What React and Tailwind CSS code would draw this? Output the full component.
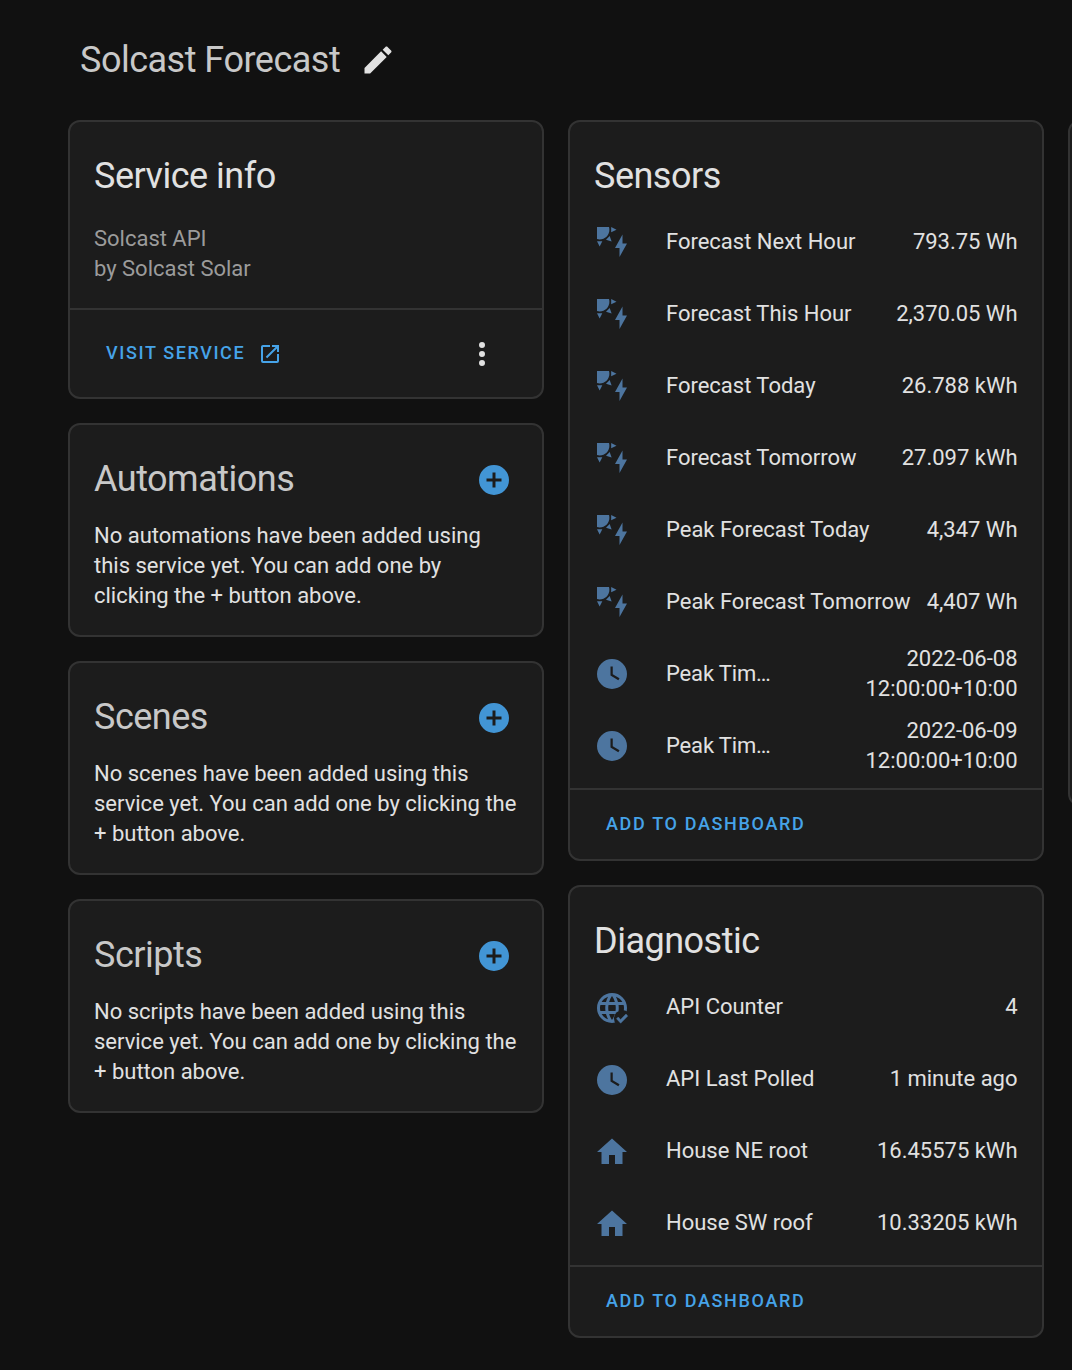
const SOLAR =
  "M11.45,2V5.55L15,3.77L11.45,2M10.45,8L8,10.46L11.75,11.71L10.45,8M2,11.45L3.77,15L5.55,11.45H2M10,2H2V10C2.57,10.17 3.17,10.25 3.77,10.25C7.35,10.26 10.26,7.35 10.27,3.75C10.26,3.16 10.17,2.57 10,2M17,22V16H14L19,7V13H22L17,22Z";
const CLOCK =
  "M12,2A10,10 0 0,0 2,12A10,10 0 0,0 12,22A10,10 0 0,0 22,12A10,10 0 0,0 12,2M16.2,16.2L11,13V7H12.5V12.2L17,14.9L16.2,16.2Z";
const HOME = "M10,20V14H14V20H19V12H22L12,3L2,12H5V20H10Z";
const PENCIL =
  "M20.71,7.04C21.1,6.65 21.1,6 20.71,5.63L18.37,3.29C18,2.9 17.35,2.9 16.96,3.29L15.12,5.12L18.87,8.87M3,17.25V21H6.75L17.81,9.93L14.06,6.18L3,17.25Z";
const OPEN =
  "M14,3V5H17.59L7.76,14.83L9.17,16.24L19,6.41V10H21V3M19,19H5V5H12V3H5C3.89,3 3,3.9 3,5V19A2,2 0 0,0 5,21H19A2,2 0 0,0 21,19V12H19V19Z";
const DOTS =
  "M12,16A2,2 0 0,1 14,18A2,2 0 0,1 12,20A2,2 0 0,1 10,18A2,2 0 0,1 12,16M12,10A2,2 0 0,1 14,12A2,2 0 0,1 12,14A2,2 0 0,1 10,12A2,2 0 0,1 12,10M12,4A2,2 0 0,1 14,6A2,2 0 0,1 12,8A2,2 0 0,1 10,6A2,2 0 0,1 12,4Z";
const PLUS =
  "M17,13H13V17H11V13H7V11H11V7H13V11H17M12,2A10,10 0 0,0 2,12A10,10 0 0,0 12,22A10,10 0 0,0 22,12A10,10 0 0,0 12,2Z";
const WEB =
  "M16.36,14C16.44,13.34 16.5,12.68 16.5,12C16.5,11.32 16.44,10.66 16.36,10H19.74C19.9,10.64 20,11.31 20,12C20,12.69 19.9,13.36 19.74,14M14.59,19.56C15.19,18.45 15.65,17.25 15.97,16H18.92C17.96,17.65 16.43,18.93 14.59,19.56M14.34,14H9.66C9.56,13.34 9.5,12.68 9.5,12C9.5,11.32 9.56,10.65 9.66,10H14.34C14.43,10.65 14.5,11.32 14.5,12C14.5,12.68 14.43,13.34 14.34,14M12,19.96C11.17,18.76 10.5,17.43 10.09,16H13.91C13.5,17.43 12.83,18.76 12,19.96M8,8H5.08C6.03,6.34 7.57,5.06 9.4,4.44C8.8,5.55 8.35,6.75 8,8M5.08,16H8C8.35,17.25 8.8,18.45 9.4,19.56C7.57,18.93 6.03,17.65 5.08,16M4.26,14C4.1,13.36 4,12.69 4,12C4,11.31 4.1,10.64 4.26,10H7.64C7.56,10.66 7.5,11.32 7.5,12C7.5,12.68 7.56,13.34 7.64,14M12,4.03C12.83,5.23 13.5,6.57 13.91,8H10.09C10.5,6.57 11.17,5.23 12,4.03M18.92,8H15.97C15.65,6.75 15.19,5.55 14.59,4.44C16.43,5.07 17.96,6.34 18.92,8M12,2C6.47,2 2,6.5 2,12A10,10 0 0,0 12,22A10,10 0 0,0 22,12A10,10 0 0,0 12,2Z";
const CHECK = "M17.75,22.16L15,19.16L16.16,18L17.75,19.59L21.34,16L22.5,17.41L17.75,22.16";

function Icon({ d, className }) {
  return (
    <svg viewBox="0 0 24 24" fill="currentColor" className={className}>
      <path d={d} />
    </svg>
  );
}

/* Globe with its lower right corner cleared for a check mark. */
function WebCheck({ className }) {
  return (
    <svg viewBox="0 0 24 24" fill="currentColor" className={className}>
      <path d={WEB} />
      <circle cx="19" cy="19" r="5.7" className="fill-[#1c1c1c]" />
      <path d={CHECK} stroke="currentColor" strokeWidth="0.3" />
    </svg>
  );
}

function Card({ className = "", children }) {
  return (
    <section
      className={`flex flex-col rounded-xl border-2 border-[#333333] bg-[#1c1c1c] ${className}`}
    >
      {children}
    </section>
  );
}

function Title({ children, className = "" }) {
  return (
    <h2 className={`text-[36px] leading-[48px] font-normal tracking-[-0.5px] ${className}`}>
      {children}
    </h2>
  );
}

const sensors = [
  [SOLAR, "Forecast Next Hour", "793.75 Wh"],
  [SOLAR, "Forecast This Hour", "2,370.05 Wh"],
  [SOLAR, "Forecast Today", "26.788 kWh"],
  [SOLAR, "Forecast Tomorrow", "27.097 kWh"],
  [SOLAR, "Peak Forecast Today", "4,347 Wh"],
  [SOLAR, "Peak Forecast Tomorrow", "4,407 Wh"],
  [CLOCK, "Peak Tim…", "2022-06-08 12:00:00+10:00"],
  [CLOCK, "Peak Tim…", "2022-06-09 12:00:00+10:00"],
];

const diagnostics = [
  [null, "API Counter", "4"],
  [CLOCK, "API Last Polled", "1 minute ago"],
  [HOME, "House NE root", "16.45575 kWh"],
  [HOME, "House SW roof", "10.33205 kWh"],
];

const addCards = [
  ["Automations", "No automations have been added using this service yet. You can add one by clicking the + button above."],
  ["Scenes", "No scenes have been added using this service yet. You can add one by clicking the + button above."],
  ["Scripts", "No scripts have been added using this service yet. You can add one by clicking the + button above."],
];

function EntityCard({ title, rows, className, iconClass = "" }) {
  return (
    <Card className={className}>
      <Title className="px-6 pt-[30px]">{title}</Title>
      <div className="mt-3 flex flex-col gap-3 pr-[24.5px] pl-6">
        {rows.map(([icon, name, value], i) => (
          <div key={i} className="flex h-[60px] items-center">
            {icon ? (
              <Icon d={icon} className={`size-9 shrink-0 text-[#4d759f] ${iconClass}`} />
            ) : (
              <WebCheck className={`size-9 shrink-0 text-[#4d759f] ${iconClass}`} />
            )}
            <span
              className={
                name.endsWith("…")
                  ? "ml-9 shrink-0 tracking-[-0.15px] whitespace-nowrap"
                  : "ml-9 shrink-0 whitespace-nowrap"
              }
            >
              {name}
            </span>
            <span
              className={
                value.length > 20 ? "ml-auto w-[160px] text-right" : "ml-auto text-right whitespace-nowrap"
              }
            >
              {value}
            </span>
          </div>
        ))}
      </div>
      <div className="mt-auto flex h-[71px] items-center border-t-2 border-[#333333] pb-0.5 pl-9">
        <button className="text-[18px] font-medium tracking-[1.66px] text-[#46a3e8]">
          ADD TO DASHBOARD
        </button>
      </div>
    </Card>
  );
}

export default function App() {
  return (
    <main className="h-[1370px] w-[1072px] overflow-hidden bg-[#111111] font-[Roboto,sans-serif] text-[22px] leading-[30px] tracking-[-0.01px] text-[#e1e1e1]">
      <header className="flex h-[120px] items-center pl-20">
        <h1 className="text-[36px] leading-[48px] font-normal tracking-[-0.5px] text-[#c8c8c8]">
          Solcast Forecast
        </h1>
        <Icon d={PENCIL} className="ml-5 size-9" />
      </header>
      <div className="flex w-[1544px] items-start gap-6 pl-[68px]">
        <div className="flex w-[476px] shrink-0 flex-col gap-6">
          <Card className="h-[279px]">
            <Title className="px-6 pt-[30px]">Service info</Title>
            <p className="mt-6 px-6 text-[#9b9b9b]">
              Solcast API
              <br />
              by Solcast Solar
            </p>
            <div className="mt-auto flex h-[89px] items-center border-t-2 border-[#333333] pr-[42px] pl-9">
              <a className="flex items-center text-[18px] font-medium tracking-[0.0892857em] text-[#46a3e8]">
                <span className="pb-0.5">VISIT SERVICE</span>
                <Icon d={OPEN} className="ml-[12.5px] size-6" />
              </a>
              <Icon d={DOTS} className="ml-auto size-9" />
            </div>
          </Card>
          {addCards.map(([title, text]) => (
            <Card key={title} className="h-[214px]">
              <div className="flex items-center justify-between pt-[30px] pr-[30px] pl-6">
                <Title className="text-[#c8c8c8]">{title}</Title>
                <Icon d={PLUS} className="mt-0.5 size-9 text-[#4295d5]" />
              </div>
              <p className="mt-[18px] pr-6 pl-6">{text}</p>
            </Card>
          ))}
        </div>
        <div className="flex w-[476px] shrink-0 flex-col gap-6">
          <EntityCard title="Sensors" rows={sensors} className="h-[741px]" />
          <EntityCard
            title="Diagnostic"
            rows={diagnostics}
            className="h-[453px]"
            iconClass="mt-0.5"
          />
        </div>
        <Card className="h-[686px] w-[476px] shrink-0" />
      </div>
    </main>
  );
}
